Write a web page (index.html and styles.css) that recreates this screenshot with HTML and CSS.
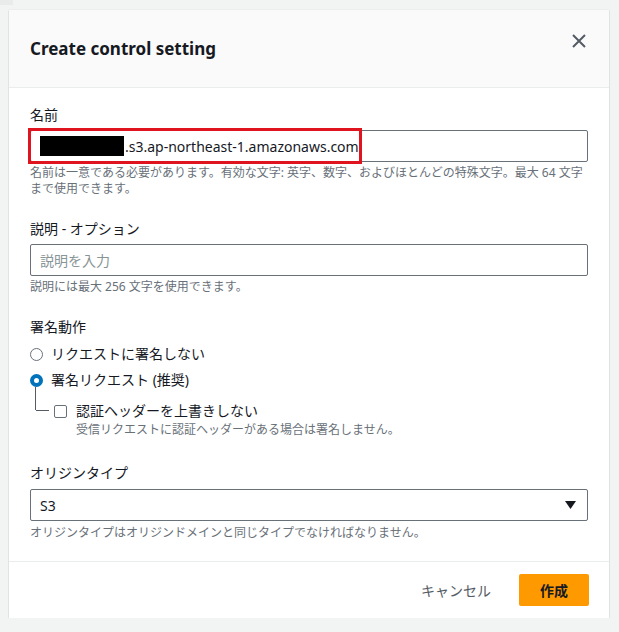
FILE: index.html
```html
<!DOCTYPE html>
<html lang="ja">
<head>
  <meta charset="UTF-8">
  <title>Create control setting</title>
  <link rel="stylesheet" href="styles.css">
</head>
<body>

  <div class="backdrop-corner"></div>

  <div class="modal">
    <div class="modal-header">
      <h2>Create control setting</h2>
      <svg class="close" width="14" height="14" viewBox="0 0 14 14">
        <path d="M1 1 L13 13 M13 1 L1 13" stroke="#545b64" stroke-width="2" fill="none"/>
      </svg>
    </div>

    <div class="modal-body">
      <!-- 名前 -->
      <div class="field">
        <label>名前</label>
        <div class="input filled">
          <span class="redact"></span>.s3.ap-northeast-1.amazonaws.com
          <div class="annotation"></div>
        </div>
        <div class="hint">名前は一意である必要があります。有効な文字: 英字、数字、およびほとんどの特殊文字。最大 64 文字<br>まで使用できます。</div>
      </div>

      <!-- 説明 -->
      <div class="field">
        <label>説明 - オプション</label>
        <div class="input placeholder">説明を入力</div>
        <div class="hint">説明には最大 256 文字を使用できます。</div>
      </div>

      <!-- 署名動作 -->
      <div class="field">
        <label>署名動作</label>
        <div class="radio-row">
          <span class="radio"></span>
          <span>リクエストに署名しない</span>
        </div>
        <div class="radio-row">
          <span class="radio checked"></span>
          <span>署名リクエスト (推奨)</span>
        </div>
        <div class="sub-option">
          <div class="check-row">
            <span class="checkbox"></span>
            <span>認証ヘッダーを上書きしない</span>
          </div>
          <div class="check-desc">受信リクエストに認証ヘッダーがある場合は署名しません。</div>
        </div>
      </div>

      <!-- オリジンタイプ -->
      <div class="field origin">
        <label>オリジンタイプ</label>
        <div class="input select">
          <span>S3</span>
          <svg width="11" height="8" viewBox="0 0 11 8"><path d="M0 0 H11 L5.5 8 Z" fill="#16191f"/></svg>
        </div>
        <div class="hint">オリジンタイプはオリジンドメインと同じタイプでなければなりません。</div>
      </div>
    </div>

    <div class="modal-footer">
      <button class="btn-link">キャンセル</button>
      <button class="btn-primary">作成</button>
    </div>
  </div>

</body>
</html>
```

FILE: styles.css
```css
body {
  margin: 0;
  background: #f2f3f3;
  font-family: "Noto Sans", "Noto Sans CJK JP", sans-serif;
  color: #16191f;
}

.backdrop-corner {
  position: absolute;
  left: 0;
  top: 0;
  width: 13px;
  height: 5px;
  background: #e9ebeb;
}

.modal {
  position: relative;
  margin: 10px 0 0 9px;
  width: 600px;
  background: #fff;
  box-shadow: 0 1px 1px rgba(0, 0, 0, 0.25), 0 0 1px rgba(0, 0, 0, 0.15);
}

.modal-header {
  height: 78px;
  background: #fafafa;
  border-bottom: 1px solid #eaeded;
  display: flex;
  align-items: center;
  justify-content: space-between;
  padding: 0 23px 0 21px;
  box-sizing: border-box;
}
.modal-header h2 {
  margin: 0;
  font-size: 17px;
  font-weight: 700;
}
.close {
  align-self: flex-start;
  margin-top: 24px;
}

.modal-body {
  padding: 17px 21px 20px 21px;
  border-bottom: 1px solid #eaeded;
}

.field + .field {
  margin-top: 22px;
}
.field.origin {
  margin-top: 24px;
}

label {
  display: block;
  font-size: 14px;
  line-height: 20px;
}

.input {
  position: relative;
  margin-top: 5px;
  height: 32px;
  box-sizing: border-box;
  border: 1px solid #687078;
  border-radius: 2px;
  padding: 0 9px;
  display: flex;
  align-items: center;
  font-size: 14px;
}
.input.placeholder {
  color: #879596;
}
.input.select {
  justify-content: space-between;
  padding-right: 11px;
  margin-top: 6px;
}
.input.select + .hint {
  margin-top: 4px;
}

.redact {
  display: inline-block;
  width: 84px;
  height: 20px;
  background: #000;
  margin-right: 1px;
}

.annotation {
  position: absolute;
  left: -3px;
  top: -3px;
  width: 334px;
  height: 36px;
  border: 3px solid #e0141e;
  box-sizing: border-box;
}

.hint {
  margin-top: 3px;
  font-size: 12px;
  line-height: 16px;
  color: #687078;
}

.radio-row {
  display: flex;
  align-items: center;
  gap: 8px;
  font-size: 14px;
  line-height: 20px;
  margin-top: 7px;
}
.radio-row + .radio-row {
  margin-top: 6px;
}
.radio {
  width: 13px;
  height: 13px;
  border: 1px solid #687078;
  border-radius: 50%;
  box-sizing: border-box;
}
.radio.checked {
  border: 4px solid #0073bb;
  position: relative;
}
.radio.checked::after {
  content: "";
  position: absolute;
  left: 1px;
  top: 9px;
  width: 1px;
  height: 23px;
  background: #545b64;
}

.sub-option {
  position: relative;
  padding-left: 46px;
  margin-top: 11px;
}
.sub-option::before {
  content: "";
  position: absolute;
  left: 6px;
  top: 9px;
  width: 13px;
  height: 1px;
  background: #545b64;
}
.check-row {
  display: flex;
  align-items: center;
  gap: 9px;
  font-size: 14px;
  line-height: 20px;
  margin-left: -22px;
}
.checkbox {
  width: 13px;
  height: 13px;
  border: 1px solid #687078;
  border-radius: 2px;
  box-sizing: border-box;
}
.check-desc {
  font-size: 12px;
  line-height: 18px;
  color: #687078;
}

.modal-footer {
  display: flex;
  justify-content: flex-end;
  align-items: center;
  gap: 14px;
  padding: 12px 20px 12px 0;
}
button {
  font-family: inherit;
  font-size: 14px;
  border: none;
  cursor: pointer;
}
.btn-link {
  background: none;
  color: #545b64;
  padding: 6px 14px;
  font-weight: 400;
}
.btn-primary {
  width: 70px;
  height: 32px;
  background: #ff9900;
  color: #16191f;
  font-weight: 700;
  border-radius: 2px;
}
```
